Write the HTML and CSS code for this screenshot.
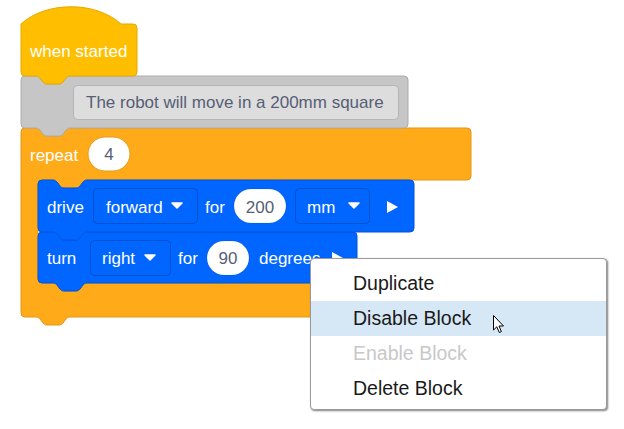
FILE: index.html
```html
<!DOCTYPE html>
<html>
<head>
<meta charset="utf-8">
<link rel="stylesheet" href="styles.css">
</head>
<body>
<div class="workspace">
  <svg class="canvas" width="624" height="429" viewBox="0 0 624 429">
    <!-- repeat block -->
    <path class="blk control" d="M21,132 a4,4 0 0 1 4,-4 H36 c2,0 3,1 4,2 l3,4 c1,1 2,2 4,2 h12 c2,0 3,-1 4,-2 l3,-4 c1,-1 2,-2 4,-2 H467 a4,4 0 0 1 4,4 V176 a4,4 0 0 1 -4,4 H87 c-2,0 -3,1 -4,2 l-3,4 c-1,1 -2,2 -4,2 h-12 c-2,0 -3,-1 -4,-2 l-3,-4 c-1,-1 -2,-2 -4,-2 H42 a4,4 0 0 0 -4,4 V279 a4,4 0 0 0 4,4 H53 c2,0 3,1 4,2 l3,4 c1,1 2,2 4,2 h12 c2,0 3,-1 4,-2 l3,-4 c1,-1 2,-2 4,-2 H467 a4,4 0 0 1 4,4 V313 a4,4 0 0 1 -4,4 H70 c-2,0 -3,1 -4,2 l-3,4 c-1,1 -2,2 -4,2 h-12 c-2,0 -3,-1 -4,-2 l-3,-4 c-1,-1 -2,-2 -4,-2 H25 a4,4 0 0 1 -4,-4 Z"/>
    <text class="lbl" x="30" y="161">repeat</text>
    <rect class="oval oval-ctl" x="88" y="137" width="42" height="34" rx="17"/>
    <text class="val" x="109" y="160" text-anchor="middle">4</text>

    <!-- turn block -->
    <path class="blk motion" d="M38,236 a4,4 0 0 1 4,-4 H53 c2,0 3,1 4,2 l3,4 c1,1 2,2 4,2 h12 c2,0 3,-1 4,-2 l3,-4 c1,-1 2,-2 4,-2 H353 a4,4 0 0 1 4,4 V279 a4,4 0 0 1 -4,4 H87 c-2,0 -3,1 -4,2 l-3,4 c-1,1 -2,2 -4,2 h-12 c-2,0 -3,-1 -4,-2 l-3,-4 c-1,-1 -2,-2 -4,-2 H42 a4,4 0 0 1 -4,-4 Z"/>
    <text class="lbl" x="47" y="264">turn</text>
    <rect class="dd" x="90.5" y="240.5" width="80" height="35" rx="4"/>
    <text class="lbl" x="102" y="264">right</text>
    <path class="arrow" d="M145,255 h10 l-5,5 z"/>
    <text class="lbl" x="178" y="264">for</text>
    <rect class="oval" x="207" y="241" width="42" height="34" rx="17"/>
    <text class="val" x="228" y="264" text-anchor="middle">90</text>
    <text class="lbl" x="259" y="264">degrees</text>
    <path class="play" d="M332,252 L343,258 L332,264 Z"/>

    <!-- drive block -->
    <path class="blk motion" d="M38,184 a4,4 0 0 1 4,-4 H53 c2,0 3,1 4,2 l3,4 c1,1 2,2 4,2 h12 c2,0 3,-1 4,-2 l3,-4 c1,-1 2,-2 4,-2 H410 a4,4 0 0 1 4,4 V228 a4,4 0 0 1 -4,4 H87 c-2,0 -3,1 -4,2 l-3,4 c-1,1 -2,2 -4,2 h-12 c-2,0 -3,-1 -4,-2 l-3,-4 c-1,-1 -2,-2 -4,-2 H42 a4,4 0 0 1 -4,-4 Z"/>
    <text class="lbl" x="47" y="213">drive</text>
    <rect class="dd" x="93.5" y="188.5" width="104" height="35" rx="4"/>
    <text class="lbl" x="106" y="213">forward</text>
    <path class="arrow" d="M172,203 h10 l-5,5 z"/>
    <text class="lbl" x="205" y="213">for</text>
    <rect class="oval" x="234" y="189" width="52" height="34" rx="17"/>
    <text class="val" x="260" y="213" text-anchor="middle">200</text>
    <rect class="dd" x="295.5" y="188.5" width="74" height="35" rx="4"/>
    <text class="lbl" x="307" y="213">mm</text>
    <path class="arrow" d="M349,203 h10 l-5,5 z"/>
    <path class="play" d="M387,201 L398,207 L387,213 Z"/>

    <!-- comment block -->
    <path class="blk comment" d="M21,80 a4,4 0 0 1 4,-4 H36 c2,0 3,1 4,2 l3,4 c1,1 2,2 4,2 h12 c2,0 3,-1 4,-2 l3,-4 c1,-1 2,-2 4,-2 H404 a4,4 0 0 1 4,4 V124 a4,4 0 0 1 -4,4 H70 c-2,0 -3,1 -4,2 l-3,4 c-1,1 -2,2 -4,2 h-12 c-2,0 -3,-1 -4,-2 l-3,-4 c-1,-1 -2,-2 -4,-2 H25 a4,4 0 0 1 -4,-4 Z"/>
    <rect class="note" x="73.5" y="85.5" width="325" height="34" rx="4"/>
    <text class="val" x="86" y="108">The robot will move in a 200mm square</text>

    <!-- hat block -->
    <path class="blk event" d="M21,24 c25,-23 75,-23 100,0 H133 a4,4 0 0 1 4,4 V72 a4,4 0 0 1 -4,4 H70 c-2,0 -3,1 -4,2 l-3,4 c-1,1 -2,2 -4,2 h-12 c-2,0 -3,-1 -4,-2 l-3,-4 c-1,-1 -2,-2 -4,-2 H25 a4,4 0 0 1 -4,-4 Z"/>
    <text class="lbl" x="30" y="57">when started</text>
  </svg>

  <div class="menu">
    <div class="item">Duplicate</div>
    <div class="item hover">Disable Block</div>
    <div class="item disabled">Enable Block</div>
    <div class="item">Delete Block</div>
  </div>

  <svg class="cursor" width="14" height="21" viewBox="0 0 14 21">
    <path d="M1.5,1.5 L1.5,16 L4.8,12.8 L7.3,18.5 L9.4,17.6 L7,12 L11.5,12 Z" fill="#fff" stroke="#000" stroke-width="1" stroke-linejoin="miter"/>
  </svg>
</div>
</body>
</html>
```

FILE: styles.css
```css
html, body {
  margin: 0;
  padding: 0;
  background: #ffffff;
}

.workspace {
  position: relative;
  width: 624px;
  height: 429px;
  overflow: hidden;
  background: #ffffff;
  font-family: "Liberation Sans", Arial, sans-serif;
}

.canvas {
  display: block;
}

.blk {
  stroke-width: 1;
}

.event {
  fill: #ffbf00;
  stroke: #e6a800;
}

.comment {
  fill: #c6c6c6;
  stroke: #adadad;
}

.control {
  fill: #ffab19;
  stroke: #e3951a;
}

.motion {
  fill: #0066ff;
  stroke: #0055d9;
}

.lbl {
  font-family: "Liberation Sans", Arial, sans-serif;
  font-size: 17px;
  fill: #ffffff;
}

.val {
  font-family: "Liberation Sans", Arial, sans-serif;
  font-size: 17px;
  fill: #575e75;
}

.note {
  fill: #dddddd;
  stroke: #b4b4b4;
}

.oval {
  fill: #ffffff;
  stroke: rgba(0, 0, 0, 0.08);
}

.oval-ctl {
  stroke: #e39a1c;
}

.dd {
  fill: #0066ff;
  stroke: #0052cc;
}

.arrow {
  fill: #ffffff;
  stroke: #ffffff;
  stroke-width: 1.5;
  stroke-linejoin: round;
}

.play {
  fill: #ffffff;
}

.menu {
  position: absolute;
  left: 310px;
  top: 258px;
  width: 297px;
  height: 152px;
  padding-top: 7px;
  box-sizing: border-box;
  background: #ffffff;
  border: 1px solid #9a9a9a;
  border-radius: 4px;
  box-shadow: 1px 1px 2px rgba(0, 0, 0, 0.5);
  display: flex;
  flex-direction: column;
}

.item {
  height: 35px;
  line-height: 35px;
  padding-left: 42px;
  font-size: 19.5px;
  color: #1a1a1a;
  white-space: nowrap;
}

.item.hover {
  background: #d6e8f6;
}

.item.disabled {
  color: #c8c8c8;
}

.cursor {
  position: absolute;
  left: 492px;
  top: 314px;
}
```
